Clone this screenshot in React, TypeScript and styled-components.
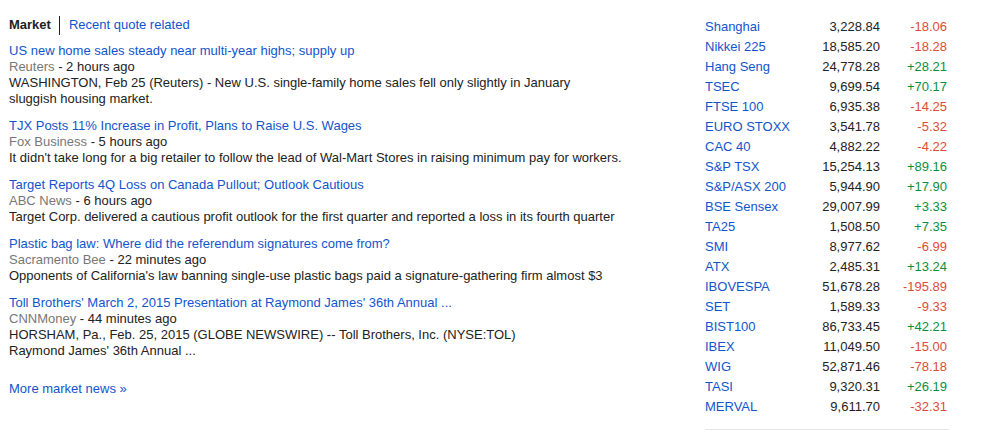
import React from "react";
import styled, { createGlobalStyle } from "styled-components";

const GlobalStyle = createGlobalStyle`
  html, body {
    margin: 0;
    padding: 0;
    background: #fff;
  }
  body {
    margin: 8px;
    font-family: "Liberation Sans", Arial, sans-serif;
    font-size: 13px;
    color: #222;
  }
`;

const Page = styled.div`
  display: flex;
  align-items: flex-start;
  padding-right: 33px;
`;

const NewsColumn = styled.div`
  flex: 1;
  min-width: 0;
  padding-top: 9px;
`;

const Tabs = styled.div`
  display: flex;
  align-items: center;
  height: 16px;
  line-height: 16px;
  margin-bottom: 10px;
`;

const ActiveTab = styled.span`
  font-weight: bold;
  color: #222;
  padding-left: 1px;
`;

const Divider = styled.span`
  display: inline-block;
  width: 1px;
  height: 19px;
  background: #222;
  margin: 0 9px 0 8px;
`;

const Link = styled.a`
  color: #15c;
  text-decoration: none;
  cursor: pointer;
`;

const NewsList = styled.div`
  display: flex;
  flex-direction: column;
  gap: 11px;
  padding-left: 1px;
`;

const NewsItem = styled.div`
  line-height: 16px;
`;

const Headline = styled.div``;

const Meta = styled.div`
  color: #222;
`;

const Source = styled.span`
  color: #777;
`;

const Snippet = styled.div`
  color: #222;
`;

const MoreLink = styled.div`
  margin-top: 22px;
  line-height: 16px;
  padding-left: 1px;
`;

const MarketColumn = styled.div`
  width: 244px;
  padding-top: 9px;
  overflow: hidden;
`;

const QuoteTable = styled.div`
  display: grid;
  grid-template-columns: 95px 80px 72px;
  grid-auto-rows: 20px;
  line-height: 20px;
  white-space: nowrap;
`;

const Name = styled.a`
  color: #15c;
  text-decoration: none;
`;

const Value = styled.span`
  text-align: right;
  color: #222;
`;

const Change = styled.span<{ $up: boolean }>`
  text-align: right;
  padding-right: 5px;
  color: ${(p) => (p.$up ? "#0a8f3d" : "#dd4b39")};
`;

const BottomRule = styled.div`
  height: 1px;
  background: #e5e5e5;
  margin-top: 12px;
`;

const news = [
  {
    title: "US new home sales steady near multi-year highs; supply up",
    source: "Reuters",
    time: "2 hours ago",
    lines: [
      "WASHINGTON, Feb 25 (Reuters) - New U.S. single-family home sales fell only slightly in January",
      "sluggish housing market.",
    ],
  },
  {
    title: "TJX Posts 11% Increase in Profit, Plans to Raise U.S. Wages",
    source: "Fox Business",
    time: "5 hours ago",
    lines: [
      "It didn't take long for a big retailer to follow the lead of Wal-Mart Stores in raising minimum pay for workers.",
    ],
  },
  {
    title: "Target Reports 4Q Loss on Canada Pullout; Outlook Cautious",
    source: "ABC News",
    time: "6 hours ago",
    lines: [
      "Target Corp. delivered a cautious profit outlook for the first quarter and reported a loss in its fourth quarter",
    ],
  },
  {
    title: "Plastic bag law: Where did the referendum signatures come from?",
    source: "Sacramento Bee",
    time: "22 minutes ago",
    lines: [
      "Opponents of California's law banning single-use plastic bags paid a signature-gathering firm almost $3",
    ],
  },
  {
    title: "Toll Brothers' March 2, 2015 Presentation at Raymond James' 36th Annual ...",
    source: "CNNMoney",
    time: "44 minutes ago",
    lines: [
      "HORSHAM, Pa., Feb. 25, 2015 (GLOBE NEWSWIRE) -- Toll Brothers, Inc. (NYSE:TOL)",
      "Raymond James' 36th Annual ...",
    ],
  },
];

const quotes: [string, string, string][] = [
  ["Shanghai", "3,228.84", "-18.06"],
  ["Nikkei 225", "18,585.20", "-18.28"],
  ["Hang Seng", "24,778.28", "+28.21"],
  ["TSEC", "9,699.54", "+70.17"],
  ["FTSE 100", "6,935.38", "-14.25"],
  ["EURO STOXX", "3,541.78", "-5.32"],
  ["CAC 40", "4,882.22", "-4.22"],
  ["S&P TSX", "15,254.13", "+89.16"],
  ["S&P/ASX 200", "5,944.90", "+17.90"],
  ["BSE Sensex", "29,007.99", "+3.33"],
  ["TA25", "1,508.50", "+7.35"],
  ["SMI", "8,977.62", "-6.99"],
  ["ATX", "2,485.31", "+13.24"],
  ["IBOVESPA", "51,678.28", "-195.89"],
  ["SET", "1,589.33", "-9.33"],
  ["BIST100", "86,733.45", "+42.21"],
  ["IBEX", "11,049.50", "-15.00"],
  ["WIG", "52,871.46", "-78.18"],
  ["TASI", "9,320.31", "+26.19"],
  ["MERVAL", "9,611.70", "-32.31"],
];

export default function App() {
  return (
    <>
      <GlobalStyle />
      <Page>
        <NewsColumn>
          <Tabs>
            <ActiveTab>Market</ActiveTab>
            <Divider />
            <Link>Recent quote related</Link>
          </Tabs>
          <NewsList>
            {news.map((n) => (
              <NewsItem key={n.title}>
                <Headline>
                  <Link>{n.title}</Link>
                </Headline>
                <Meta>
                  <Source>{n.source}</Source> - {n.time}
                </Meta>
                {n.lines.map((l) => (
                  <Snippet key={l}>{l}</Snippet>
                ))}
              </NewsItem>
            ))}
          </NewsList>
          <MoreLink>
            <Link>More market news »</Link>
          </MoreLink>
        </NewsColumn>
        <MarketColumn>
          <QuoteTable>
            {quotes.map(([name, value, change]) => (
              <React.Fragment key={name}>
                <Name>{name}</Name>
                <Value>{value}</Value>
                <Change $up={change.startsWith("+")}>{change}</Change>
              </React.Fragment>
            ))}
          </QuoteTable>
          <BottomRule />
        </MarketColumn>
      </Page>
    </>
  );
}
